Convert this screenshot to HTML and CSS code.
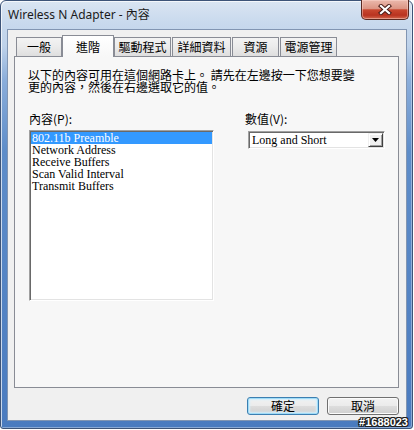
FILE: index.html
```html
<!DOCTYPE html>
<html>
<head>
<meta charset="utf-8">
<link rel="stylesheet" href="styles.css">
</head>
<body>
<div class="window">
  <div class="titlebar">
    <span class="title">Wireless N Adapter - 內容</span>
    <div class="close">
      <svg width="14" height="11" viewBox="0 0 14 11">
        <path d="M3 2 L11 9 M11 2 L3 9" stroke="#4a1d18" stroke-width="4.2" stroke-linecap="square" fill="none"/>
        <path d="M3 2 L11 9 M11 2 L3 9" stroke="#ffffff" stroke-width="2.2" stroke-linecap="square" fill="none"/>
      </svg>
    </div>
  </div>
  <div class="client">
    <div class="tabs">
      <div class="tab tab-general">一般</div>
      <div class="tab tab-advanced active">進階</div>
      <div class="tab tab-driver">驅動程式</div>
      <div class="tab tab-details">詳細資料</div>
      <div class="tab tab-resources">資源</div>
      <div class="tab tab-power">電源管理</div>
    </div>
    <div class="panel">
      <p class="desc">以下的內容可用在這個網路卡上。 請先在左邊按一下您想要變<br>更的內容，然後在右邊選取它的值。</p>
      <div class="cols">
        <div class="col-left">
          <div class="label">內容(P):</div>
          <ul class="listbox">
            <li class="selected">802.11b Preamble</li>
            <li>Network Address</li>
            <li>Receive Buffers</li>
            <li>Scan Valid Interval</li>
            <li>Transmit Buffers</li>
          </ul>
        </div>
        <div class="col-right">
          <div class="label">數值(V):</div>
          <div class="combo">
            <span class="combo-text">Long and Short</span>
            <span class="combo-btn">
              <svg width="7" height="4" viewBox="0 0 7 4"><path d="M0 0 H7 L3.5 4 Z" fill="#000"/></svg>
            </span>
          </div>
        </div>
      </div>
    </div>
    <div class="buttons">
      <button class="btn default">確定</button>
      <button class="btn">取消</button>
    </div>
  </div>
  <div class="watermark">#1688023</div>
</div>
</body>
</html>
```
FILE: styles.css
```css
body {
  margin: 0;
  background: #ffffff;
  font-family: "Noto Sans CJK TC", sans-serif;
}

.window {
  position: relative;
  width: 413px;
  height: 429px;
  box-sizing: border-box;
  border: 1px solid #3d5478;
  border-radius: 6px 6px 3px 3px;
  padding: 0 5px 7px 6px;
  display: flex;
  flex-direction: column;
  background: linear-gradient(180deg, #dae5f2 0px, #c8d9ed 22px, #bed2ea 45px, #8aadda 80px, #5e8dc9 150px, #4a7bbf 100%);
  box-shadow: inset 1px 1px 0 rgba(255, 255, 255, 0.7), inset -1px -1px 0 rgba(255, 255, 255, 0.35);
}

.titlebar {
  height: 28px;
  display: flex;
  flex: none;
}

.title {
  font-family: "Noto Sans", "Noto Sans CJK TC", sans-serif;
  font-size: 12px;
  line-height: 14px;
  padding: 7px 0 0 1px;
  color: #1b1b1b;
}

.close {
  margin: -1px -2px 0 auto;
  width: 48px;
  height: 20px;
  box-sizing: border-box;
  border: 1px solid #5a2a22;
  border-top: none;
  border-radius: 0 0 5px 5px;
  background: linear-gradient(180deg, #ebb9ac 0%, #dc9584 45%, #c8472f 52%, #b93320 80%, #d2674d 100%);
  box-shadow: inset 0 0 0 1px rgba(255, 220, 210, 0.45);
  display: flex;
  align-items: center;
  justify-content: center;
}

.client {
  flex: 1;
  border: 1px solid #8195b2;
  background: #f0f0f0;
  padding: 5px 7px 5px 6px;
  display: flex;
  flex-direction: column;
}

.tabs {
  display: flex;
  align-items: flex-end;
  height: 21px;
  padding-left: 2px;
  flex: none;
}

.tab {
  height: 19px;
  box-sizing: border-box;
  border: 1px solid #898c95;
  border-bottom: none;
  background: linear-gradient(180deg, #f3f3f3 0%, #ebebeb 50%, #dedede 100%);
  font-size: 12px;
  line-height: 12px;
  display: flex;
  align-items: center;
  justify-content: center;
  color: #000;
}

.tab.active {
  height: 22px;
  margin-bottom: -1px;
  background: linear-gradient(180deg, #ffffff 0%, #f7f7f7 100%);
  position: relative;
  z-index: 1;
}

.tab-general { width: 46px; }
.tab-advanced { width: 52px; }
.tab-driver { width: 57px; }
.tab-details { width: 59px; margin-left: 1px; }
.tab-resources { width: 47px; margin-left: 1px; }
.tab-power { width: 57px; margin-left: 1px; }

.panel {
  height: 332px;
  box-sizing: border-box;
  border: 1px solid #898c95;
  background: #f7f7f7;
  padding: 12px 0 0 13px;
  flex: none;
}

.desc {
  margin: 0;
  font-size: 12px;
  line-height: 12px;
  color: #000;
}

.cols {
  display: flex;
  margin-top: 20px;
  margin-left: 1px;
}

.col-left {
  width: 185px;
}

.col-right {
  margin-left: 31px;
}

.label {
  font-size: 12px;
  line-height: 12px;
  color: #000;
}

.listbox {
  margin: 5px 0 0;
  padding: 1px;
  list-style: none;
  width: 185px;
  height: 171px;
  box-sizing: border-box;
  border: 1px solid;
  border-color: #a0a0a0 #ffffff #ffffff #a0a0a0;
  box-shadow: inset 1px 1px 0 #696969, inset -1px -1px 0 #e3e3e3;
  background: #ffffff;
  font-family: "Liberation Serif", serif;
  font-size: 12px;
}

.listbox li {
  height: 12px;
  line-height: 12px;
  padding-left: 1px;
  white-space: nowrap;
}

.listbox li.selected {
  background: #3399ff;
  color: #ffffff;
}

.combo {
  margin: 6px 0 0 3px;
  width: 137px;
  height: 18px;
  box-sizing: border-box;
  border: 1px solid;
  border-color: #a0a0a0 #ffffff #ffffff #a0a0a0;
  box-shadow: inset 1px 1px 0 #696969, inset -1px -1px 0 #e3e3e3;
  background: #ffffff;
  padding: 1px;
  display: flex;
  align-items: center;
  font-family: "Liberation Serif", serif;
  font-size: 12px;
}

.combo-text {
  flex: 1;
  padding-left: 2px;
  line-height: 12px;
}

.combo-btn {
  width: 15px;
  height: 14px;
  box-sizing: border-box;
  border: 1px solid;
  border-color: #f0f0f0 #404040 #404040 #f0f0f0;
  box-shadow: inset 1px 1px 0 #ffffff, inset -1px -1px 0 #a0a0a0;
  background: #f0f0f0;
  display: flex;
  align-items: center;
  justify-content: center;
}

.buttons {
  display: flex;
  justify-content: flex-end;
  gap: 8px;
  margin-top: 9px;
  flex: none;
}

.btn {
  width: 72px;
  height: 18px;
  box-sizing: border-box;
  border: 1px solid #707070;
  border-radius: 3px;
  background: linear-gradient(180deg, #f2f2f2 0%, #ebebeb 50%, #dddddd 51%, #cfcfcf 100%);
  box-shadow: inset 0 0 0 1px #fbfbfb;
  font-family: "Noto Sans CJK TC", sans-serif;
  font-size: 12px;
  line-height: 12px;
  padding: 0;
  color: #000;
}

.btn.default {
  border-color: #3c7fb1;
  box-shadow: inset 0 0 0 1px #9fdcf8, inset 0 0 2px 2px #d3eefb;
}

.watermark {
  position: absolute;
  right: 4px;
  bottom: 0;
  font-family: "Liberation Sans", sans-serif;
  font-weight: bold;
  font-size: 11px;
  line-height: 11px;
  color: #ffffff;
  text-shadow: 1px 0 0 #1e1e1e, -1px 0 0 #1e1e1e, 0 1px 0 #1e1e1e, 0 -1px 0 #1e1e1e, 1px 1px 0 #1e1e1e, -1px -1px 0 #1e1e1e, 1px -1px 0 #1e1e1e, -1px 1px 0 #1e1e1e;
}
```
